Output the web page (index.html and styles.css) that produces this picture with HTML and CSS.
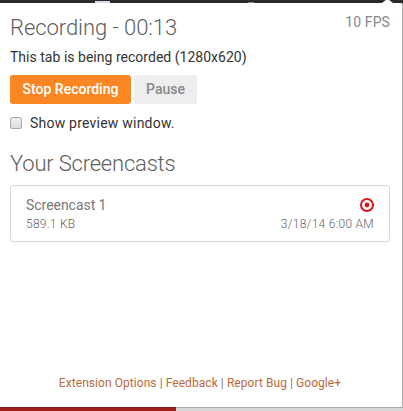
FILE: index.html
```html
<!DOCTYPE html>
<html lang="en">
<head>
<meta charset="utf-8">
<title>Screencast recorder</title>
<link rel="stylesheet" href="styles.css">
</head>
<body>
<div class="toolbar"><span class="glint"></span><span class="glint small"></span><span class="arrow"></span></div>
<main class="popup">
  <header class="top"><h1>Recording - 00:13</h1><span class="fps">10 FPS</span></header>
  <p class="status">This tab is being recorded (1280x620)</p>
  <div class="buttons"><button class="stop">Stop Recording</button><button class="pause">Pause</button></div>
  <label class="preview"><input type="checkbox"><span>Show preview window.</span></label>
  <h2>Your Screencasts</h2>
  <article class="card">
    <div class="row name"><span>Screencast 1</span>
      <svg width="14" height="14" viewBox="0 0 14 14"><circle cx="7" cy="7" r="6" fill="none" stroke="#d9141b" stroke-width="2"/><circle cx="7" cy="7" r="2.4" fill="#d9141b"/></svg>
    </div>
    <div class="row meta"><span>589.1 KB</span><span class="date">3/18/14 6:00 AM</span></div>
  </article>
  <footer><a>Extension Options</a> | <a>Feedback</a> | <a>Report Bug</a> | <a>Google+</a></footer>
</main>
<div class="page"><div class="banner"></div></div>
</body>
</html>
```
FILE: styles.css
```css
* { box-sizing: border-box; }
body { margin: 0; width: 403px; height: 411px; overflow: hidden; background: linear-gradient(#2c2a2b 23px, #d8d8d8 23px); font-family: Roboto, sans-serif; font-size: 14px; color: #333; }
.toolbar { height: 3px; background: #2c2a2b; position: relative; }
.glint { position: absolute; left: 95px; top: 1px; width: 15px; height: 2px; background: #ddd9e8; }
.glint.small { left: 248px; top: 2px; width: 6px; height: 1px; background: #888; }
.arrow { position: absolute; left: 382px; top: 0; width: 11px; height: 3px; background: #fff; clip-path: polygon(35% 0, 65% 0, 100% 100%, 0 100%); }
.popup { width: 403px; height: 404px; padding: 9px 12px 0 10px; background: #fff; border-right: 1px solid #aaa; border-radius: 0 2px 2px 0; display: flex; flex-direction: column; }
.top { height: 32px; display: flex; justify-content: space-between; }
h1, h2 { margin: 0; font-size: 22px; font-weight: 300; color: #606060; line-height: 32px; white-space: nowrap; }
h1 { letter-spacing: -0.06px; }
h2 { letter-spacing: -0.2px; }
.fps { font-size: 14px; line-height: 20px; color: #888; letter-spacing: 0.1px; }
.status { margin: 0; height: 26px; line-height: 26px; letter-spacing: 0.02px; }
.buttons { display: flex; gap: 3px; margin-top: 5px; height: 29px; }
button { border: 0; padding: 0; border-radius: 3px; font: 500 14px/29px Roboto, sans-serif; white-space: nowrap; }
.stop { width: 121px; background: #fb8724; color: #fff; }
.pause { width: 63px; background: #eee; color: #888; }
.preview { display: flex; align-items: center; height: 24px; margin-top: 7px; letter-spacing: 0.22px; }
.preview input { appearance: none; width: 12px; height: 12px; margin: 0 8px 0 0; border: 1px solid #aaa; border-radius: 2px; background: linear-gradient(#eee, #ddd); }
h2 { margin-top: 13px; }
.card { height: 57px; margin-top: 5px; border: 1px solid #d8d8d8; border-radius: 3px; padding: 10px 15px 0 15px; color: #777; }
.row { display: flex; justify-content: space-between; align-items: center; height: 18px; }
.name { letter-spacing: -0.04px; }
.meta { font-size: 12px; font-weight: 300; height: 19px; color: #666; letter-spacing: 0.25px; }
.date { letter-spacing: 0.28px; }
footer { margin-top: 131px; height: 20px; line-height: 20px; font-size: 12px; text-align: center; color: #777; white-space: nowrap; letter-spacing: 0.06px; }
footer a { color: #b96b3d; }
.page { height: 4px; background: #d8d8d8; border-top: 1px solid #aaa; }
.banner { width: 176px; height: 4px; margin-top: -1px; background: #a01f1b; border-top: 1px solid #801b18; }
```
